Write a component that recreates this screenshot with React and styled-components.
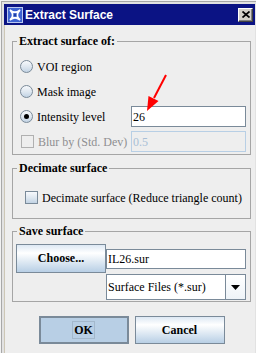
import React from 'react'
import styled, { createGlobalStyle } from 'styled-components'

const GlobalStyle = createGlobalStyle`
  html, body { margin: 0; padding: 0; background: #ffffff; }
  body {
    font-family: 'Liberation Serif', 'Times New Roman', serif;
    font-size: 12px;
    color: #000000;
  }
  * { box-sizing: border-box; }
`

const Frame = styled.div`
  position: relative;
  width: 256px;
  height: 353px;
  padding: 4px 1px 0 4px;
  display: flex;
  flex-direction: column;
  background: #e2e2e2;
  box-shadow: inset 1px 1px 0 #f2f2f2, inset 2px 2px 0 #a8a8a8;
`

const TitleBar = styled.div`
  flex: none;
  height: 21px;
  display: flex;
  align-items: center;
  padding: 0 2px 0 3px;
  background: #0b1384;
  color: #ffffff;
  font: bold 12px 'Liberation Sans', Arial, sans-serif;
`

const Title = styled.span`
  margin-left: 2px;
`

const CloseButton = styled.div`
  margin-left: auto;
  width: 15px;
  height: 14px;
  display: flex;
  align-items: center;
  justify-content: center;
  background: #d4d0c8;
  border: 1px solid;
  border-color: #ffffff #404040 #404040 #ffffff;
  box-shadow: inset -1px -1px 0 #808080;
`

const Body = styled.div`
  flex: 1;
  display: flex;
  flex-direction: column;
  padding: 9px 4px 0 7px;
  background: #eeeeee;
  border-left: 1px solid #cdc7b6;
`

const Group = styled.fieldset`
  margin: ${p => p.$gap || 0}px 0 0;
  padding: ${p => p.$pad};
  border: 1px solid #a5a5a5;
  min-width: 0;
`

const Legend = styled.legend`
  margin-left: 1px;
  padding: 0 2px;
  font-weight: bold;
  font-size: 12px;
  line-height: 14px;
`

const OptionGrid = styled.div`
  display: grid;
  grid-template-columns: 115px 115px;
  grid-auto-rows: 25px;
  align-items: center;
`

const Option = styled.div`
  display: flex;
  align-items: center;
  gap: 4px;
  padding-left: ${p => p.$indent}px;
  color: ${p => (p.$disabled ? '#8e8f91' : '#000000')};
  white-space: nowrap;
  line-height: 14px;
`

const Radio = styled.span`
  position: relative;
  flex: none;
  width: 13px;
  height: 13px;
  border-radius: 50%;
  border: 1px solid #7a8a99;
  background: linear-gradient(#f7f9fc, #dde6ef 55%, #c2d3e4);
  &::after {
    content: '';
    display: ${p => (p.$checked ? 'block' : 'none')};
    position: absolute;
    left: 3px;
    top: 3px;
    width: 5px;
    height: 5px;
    border-radius: 50%;
    background: #000000;
  }
`

const Check = styled.span`
  flex: none;
  width: 13px;
  height: 13px;
  border: 1px solid ${p => (p.$disabled ? '#b0b0b0' : '#7a8a99')};
  background: ${p =>
    p.$disabled ? '#eeeeee' : 'linear-gradient(#f7f9fc, #dde6ef 55%, #c2d3e4)'};
`

const TextField = styled.div`
  height: ${p => p.$h || 21}px;
  display: flex;
  align-items: center;
  padding: 0 1px;
  border: 1px solid ${p => (p.$disabled ? '#b8cfe5' : '#7a8a99')};
  background: ${p => (p.$disabled ? '#eeeeee' : '#ffffff')};
  color: ${p => (p.$disabled ? '#a9bfd6' : '#000000')};
  line-height: 14px;
  white-space: nowrap;
`

const SaveGrid = styled.div`
  display: grid;
  grid-template-columns: 90px 140px;
  grid-template-rows: 29px 26px;
  row-gap: 1px;
`

const Button = styled.div`
  width: ${p => p.$w || 90}px;
  height: ${p => p.$h || 27}px;
  display: flex;
  align-items: center;
  justify-content: center;
  font-weight: bold;
  font-size: 12px;
  border: ${p => (p.$pressed ? '2px' : '1px')} solid #7a8a99;
  background: ${p =>
    p.$pressed ? '#b8cfe5' : 'linear-gradient(#dde8f3 0%, #ffffff 30%, #b8cfe5 100%)'};
`

const Focus = styled.span`
  padding: 1px 1px;
  border: 1px solid #a3b8cc;
  line-height: 14px;
`

const FileField = styled(TextField)`
  align-self: center;
`

const Combo = styled.div`
  grid-column: 2;
  display: flex;
  border: 1px solid #7a8a99;
  background: #ffffff;
`

const ComboText = styled.div`
  flex: 1;
  display: flex;
  align-items: center;
  padding: 0 1px;
  white-space: nowrap;
`

const ComboArrow = styled.div`
  width: 20px;
  display: flex;
  align-items: center;
  justify-content: center;
  border-left: 1px solid #7a8a99;
  background: linear-gradient(#ffffff, #eef3f8);
`

const ButtonRow = styled.div`
  display: flex;
  justify-content: center;
  gap: 6px;
  margin-top: 14px;
`

const Annotation = styled.svg`
  position: absolute;
  left: 140px;
  top: 70px;
`

const AppIcon = () => (
  <svg width="16" height="16" viewBox="0 0 16 16">
    <rect x="0.5" y="0.5" width="15" height="15" fill="#3d63d2" stroke="#b9c8f0" />
    <path d="M3.5 3.5 Q8 8 3.5 12.5 M12.5 3.5 Q8 8 12.5 12.5 M3.5 3.5 Q8 7 12.5 3.5 M3.5 12.5 Q8 9 12.5 12.5"
      fill="none" stroke="#ffffff" strokeWidth="1.8" strokeLinecap="round" />
    <circle cx="8" cy="8" r="1.6" fill="#1d3fa8" />
  </svg>
)

const CloseIcon = () => (
  <svg width="8" height="7" viewBox="0 0 8 7">
    <path d="M0.5 0.5 L7.5 6.5 M7.5 0.5 L0.5 6.5" stroke="#000000" strokeWidth="1.7" />
  </svg>
)

const DownTriangle = () => (
  <svg width="9" height="5" viewBox="0 0 9 5">
    <path d="M0 0 H9 L4.5 5 Z" fill="#000000" />
  </svg>
)

export default function App() {
  return (
    <>
      <GlobalStyle />
      <Frame>
        <TitleBar>
          <AppIcon />
          <Title>Extract Surface</Title>
          <CloseButton><CloseIcon /></CloseButton>
        </TitleBar>
        <Body>
          <Group $pad="6px 4px 0 3px">
            <Legend>Extract surface of:</Legend>
            <OptionGrid>
              <Option $indent={4}><Radio />VOI region</Option>
              <span />
              <Option $indent={4}><Radio />Mask image</Option>
              <span />
              <Option $indent={4}><Radio $checked />Intensity level</Option>
              <TextField>26</TextField>
              <Option $indent={5} $disabled><Check $disabled />Blur by (Std. Dev)</Option>
              <TextField $disabled>0.5</TextField>
            </OptionGrid>
          </Group>

          <Group $gap={6} $pad="10px 4px 8px 3px">
            <Legend>Decimate surface</Legend>
            <OptionGrid>
              <Option $indent={9}><Check />Decimate surface (Reduce triangle count)</Option>
            </OptionGrid>
          </Group>

          <Group $gap={5} $pad="6px 4px 1px 3px">
            <Legend>Save surface</Legend>
            <SaveGrid>
              <Button $h={29}>Choose...</Button>
              <FileField $h={20}>IL26.sur</FileField>
              <Combo>
                <ComboText>Surface Files (*.sur)</ComboText>
                <ComboArrow><DownTriangle /></ComboArrow>
              </Combo>
            </SaveGrid>
          </Group>

          <ButtonRow>
            <Button $pressed $h={28}><Focus>OK</Focus></Button>
            <Button $h={28}>Cancel</Button>
          </ButtonRow>
        </Body>

        <Annotation width="30" height="45" viewBox="0 0 30 45">
          <line x1="26" y1="5" x2="14" y2="28" stroke="#ff0000" strokeWidth="2" />
          <polygon points="7,41 8.5,26 18.5,31" fill="#ff0000" />
        </Annotation>
      </Frame>
    </>
  )
}
